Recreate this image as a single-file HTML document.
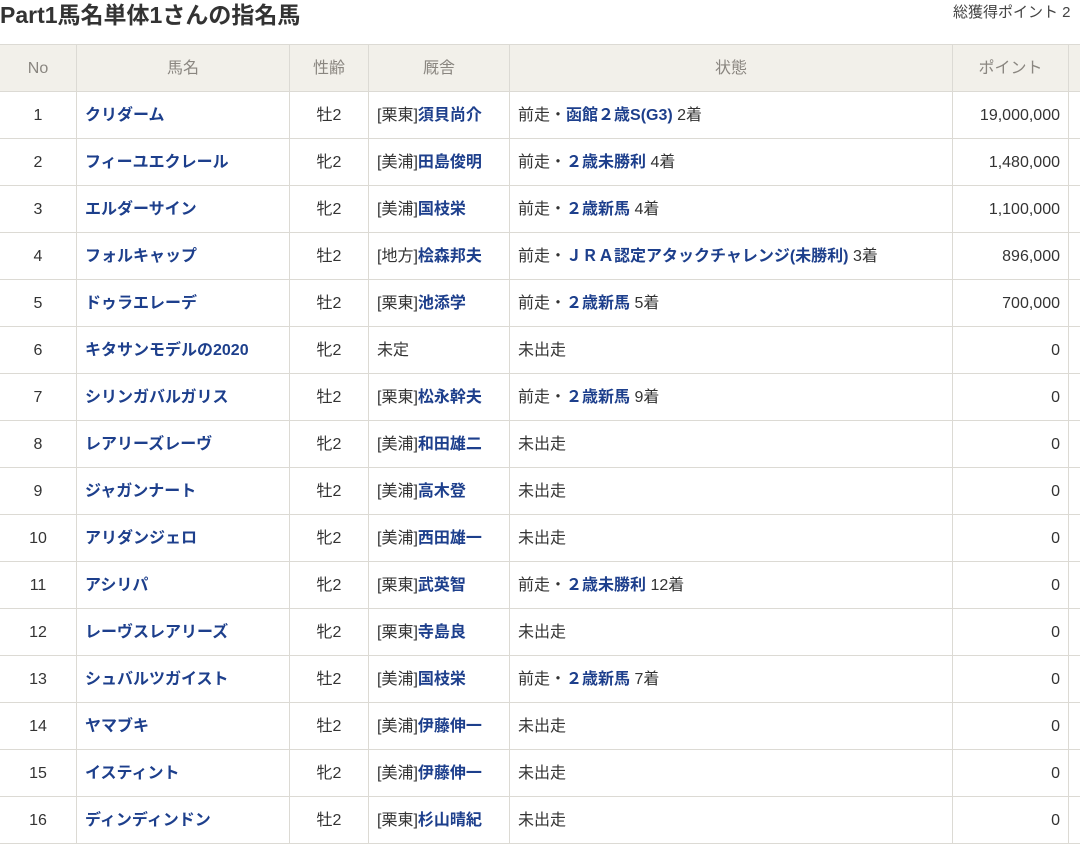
<!DOCTYPE html>
<html><head><meta charset="utf-8"><style>
body{margin:0;width:1080px;height:850px;overflow:hidden;background:#fff;font-family:"Liberation Sans","Noto Sans CJK JP",sans-serif;color:#333;position:relative;}
h1{position:absolute;left:0;top:0;margin:0;font-size:23px;font-weight:bold;color:#333;line-height:30px;}
.tot{position:absolute;left:953px;top:1px;font-size:15px;color:#444;white-space:nowrap;}
table{position:absolute;left:-1px;top:44px;border-collapse:collapse;table-layout:fixed;font-size:16px;width:1130px;}
td,th{border:1px solid #dcdad4;height:47px;padding:2px 8px 0;white-space:nowrap;overflow:hidden;box-sizing:border-box;line-height:20px;vertical-align:middle;}
th{background:#f2f0ea;color:#8a8680;font-weight:normal;font-size:16px;}
td.c{text-align:center;}td.r{text-align:right;}
a{color:#1d3f8c;font-weight:bold;text-decoration:none;}
</style></head><body>
<h1>Part1馬名単体1さんの指名馬</h1>
<div class="tot">総獲得ポイント 2</div>
<table>
<colgroup><col style="width:77px"><col style="width:213px"><col style="width:79px"><col style="width:141px"><col style="width:443px"><col style="width:116px"><col style="width:61px"></colgroup>
<tr><th>No</th><th>馬名</th><th>性齢</th><th>厩舎</th><th>状態</th><th>ポイント</th><th></th></tr>
<tr><td class="c">1</td><td><a>クリダーム</a></td><td class="c">牡2</td><td>[栗東]<a>須貝尚介</a></td><td>前走・<a>函館２歳S(G3)</a> 2着</td><td class="r">19,000,000</td><td></td></tr>
<tr><td class="c">2</td><td><a>フィーユエクレール</a></td><td class="c">牝2</td><td>[美浦]<a>田島俊明</a></td><td>前走・<a>２歳未勝利</a> 4着</td><td class="r">1,480,000</td><td></td></tr>
<tr><td class="c">3</td><td><a>エルダーサイン</a></td><td class="c">牝2</td><td>[美浦]<a>国枝栄</a></td><td>前走・<a>２歳新馬</a> 4着</td><td class="r">1,100,000</td><td></td></tr>
<tr><td class="c">4</td><td><a>フォルキャップ</a></td><td class="c">牡2</td><td>[地方]<a>桧森邦夫</a></td><td>前走・<a>ＪＲＡ認定アタックチャレンジ(未勝利)</a> 3着</td><td class="r">896,000</td><td></td></tr>
<tr><td class="c">5</td><td><a>ドゥラエレーデ</a></td><td class="c">牡2</td><td>[栗東]<a>池添学</a></td><td>前走・<a>２歳新馬</a> 5着</td><td class="r">700,000</td><td></td></tr>
<tr><td class="c">6</td><td><a>キタサンモデルの2020</a></td><td class="c">牝2</td><td>未定</td><td>未出走</td><td class="r">0</td><td></td></tr>
<tr><td class="c">7</td><td><a>シリンガバルガリス</a></td><td class="c">牡2</td><td>[栗東]<a>松永幹夫</a></td><td>前走・<a>２歳新馬</a> 9着</td><td class="r">0</td><td></td></tr>
<tr><td class="c">8</td><td><a>レアリーズレーヴ</a></td><td class="c">牝2</td><td>[美浦]<a>和田雄二</a></td><td>未出走</td><td class="r">0</td><td></td></tr>
<tr><td class="c">9</td><td><a>ジャガンナート</a></td><td class="c">牡2</td><td>[美浦]<a>高木登</a></td><td>未出走</td><td class="r">0</td><td></td></tr>
<tr><td class="c">10</td><td><a>アリダンジェロ</a></td><td class="c">牝2</td><td>[美浦]<a>西田雄一</a></td><td>未出走</td><td class="r">0</td><td></td></tr>
<tr><td class="c">11</td><td><a>アシリパ</a></td><td class="c">牝2</td><td>[栗東]<a>武英智</a></td><td>前走・<a>２歳未勝利</a> 12着</td><td class="r">0</td><td></td></tr>
<tr><td class="c">12</td><td><a>レーヴスレアリーズ</a></td><td class="c">牝2</td><td>[栗東]<a>寺島良</a></td><td>未出走</td><td class="r">0</td><td></td></tr>
<tr><td class="c">13</td><td><a>シュバルツガイスト</a></td><td class="c">牡2</td><td>[美浦]<a>国枝栄</a></td><td>前走・<a>２歳新馬</a> 7着</td><td class="r">0</td><td></td></tr>
<tr><td class="c">14</td><td><a>ヤマブキ</a></td><td class="c">牡2</td><td>[美浦]<a>伊藤伸一</a></td><td>未出走</td><td class="r">0</td><td></td></tr>
<tr><td class="c">15</td><td><a>イスティント</a></td><td class="c">牝2</td><td>[美浦]<a>伊藤伸一</a></td><td>未出走</td><td class="r">0</td><td></td></tr>
<tr><td class="c">16</td><td><a>ディンディンドン</a></td><td class="c">牡2</td><td>[栗東]<a>杉山晴紀</a></td><td>未出走</td><td class="r">0</td><td></td></tr>
</table>
</body></html>
